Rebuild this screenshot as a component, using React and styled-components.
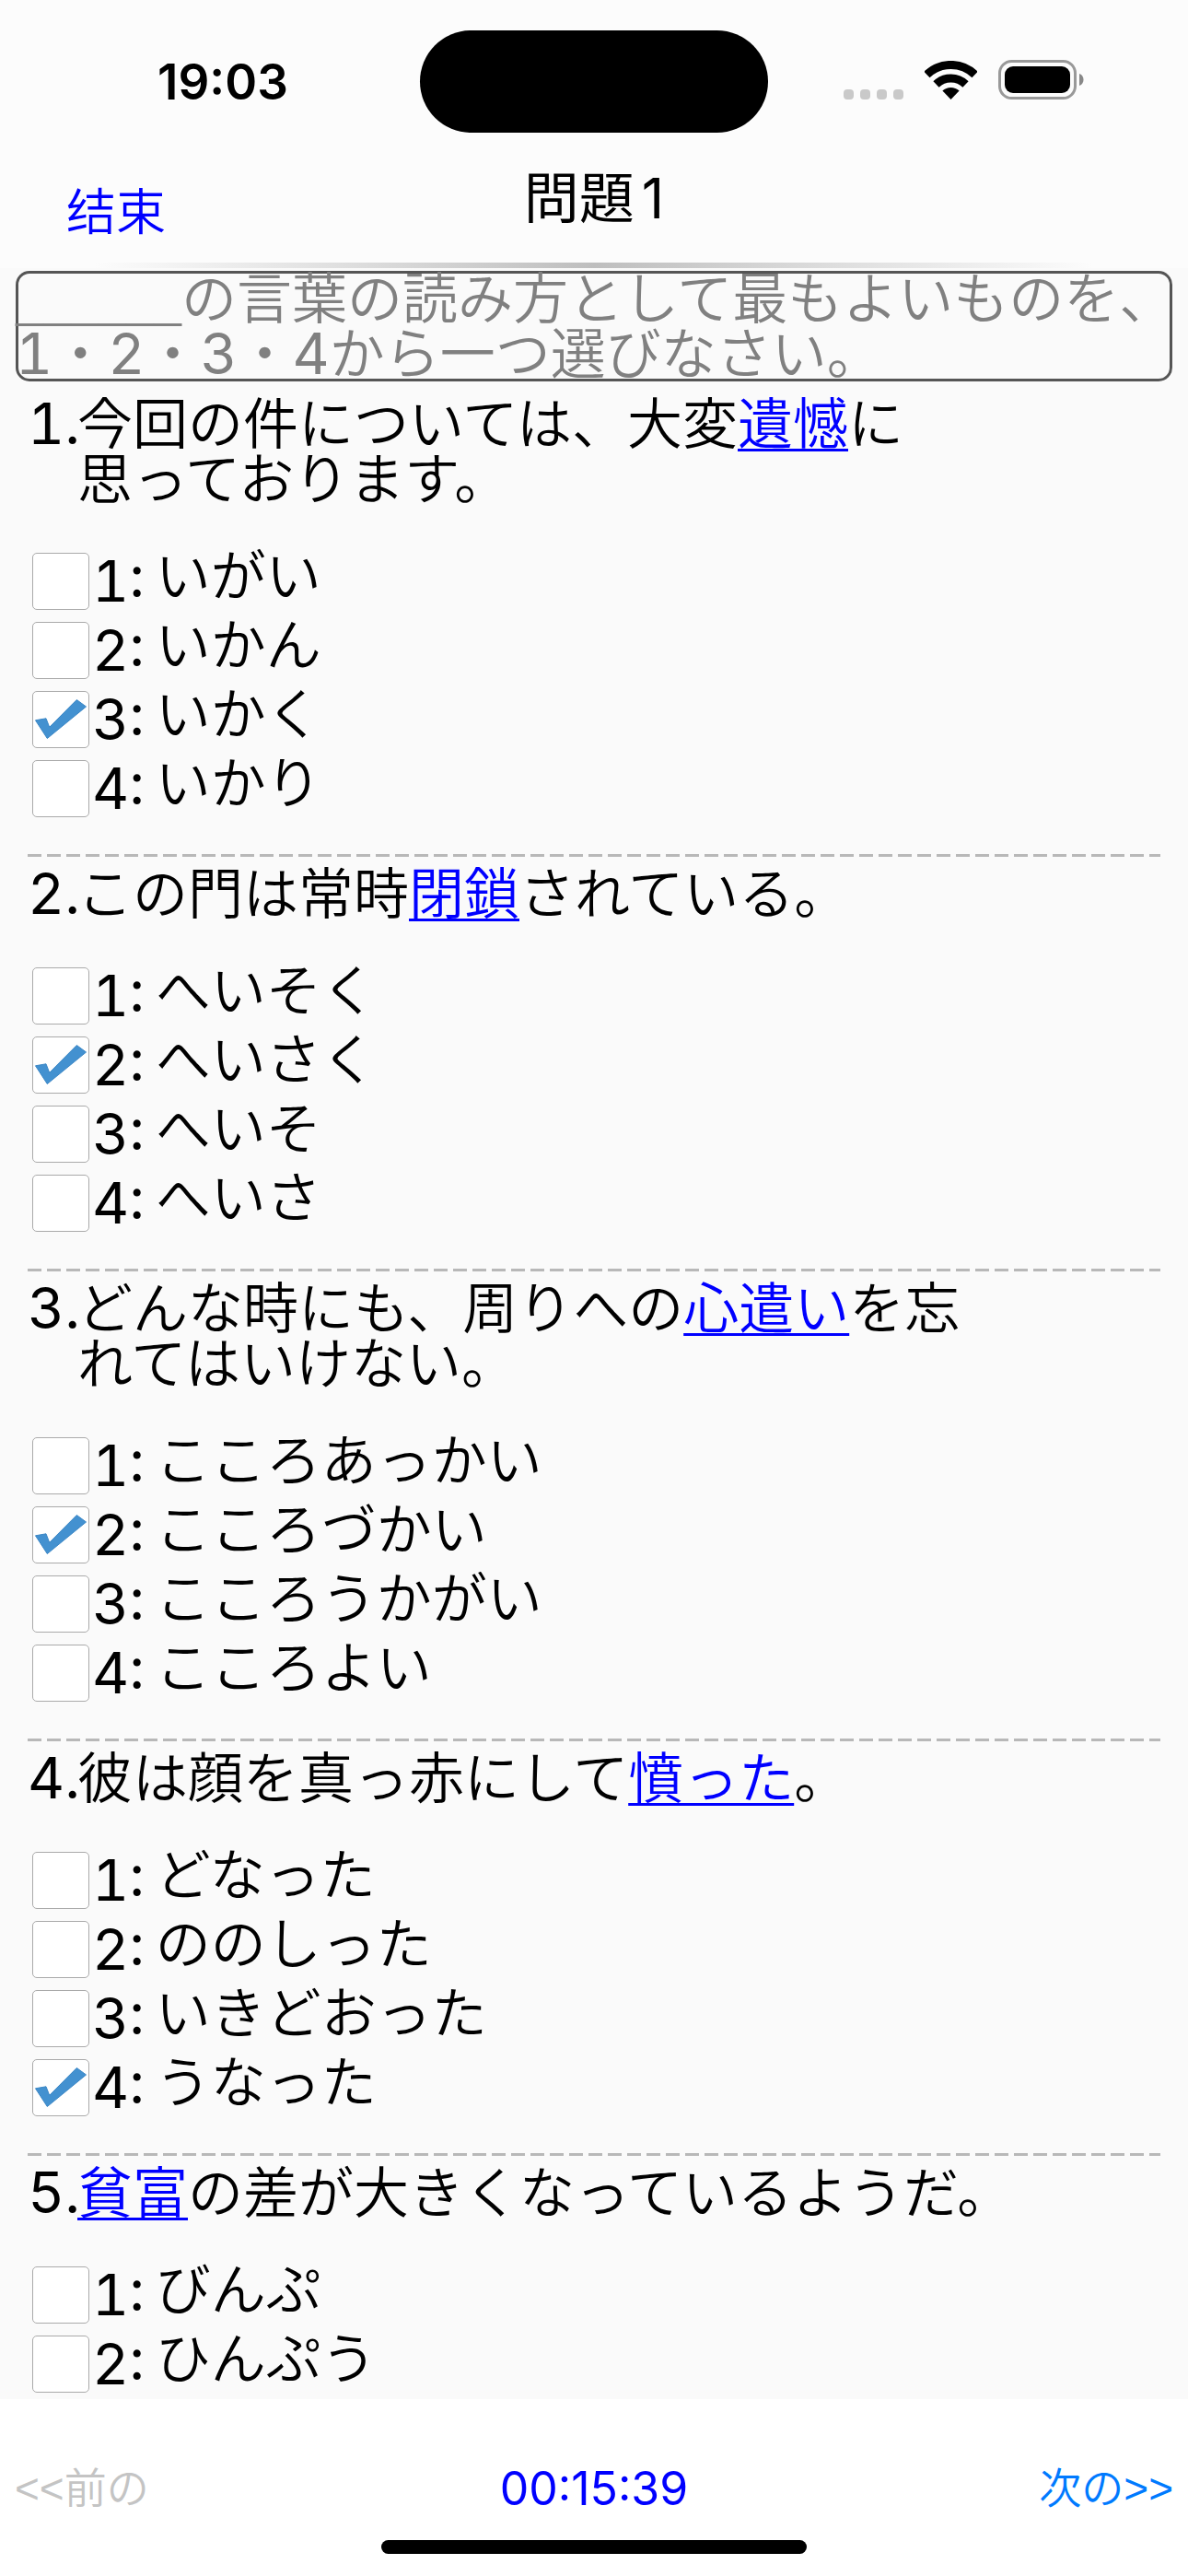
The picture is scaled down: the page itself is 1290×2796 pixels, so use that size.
import React, { useState } from 'react';
import styled, { createGlobalStyle } from 'styled-components';

const questions = [
  {
    id: 1,
    before: '今回の件については、大変',
    word: '遺憾',
    after: ['に', '思っております。'],
    options: ['いがい', 'いかん', 'いかく', 'いかり'],
  },
  {
    id: 2,
    before: 'この門は常時',
    word: '閉鎖',
    after: ['されている。'],
    options: ['へいそく', 'へいさく', 'へいそ', 'へいさ'],
  },
  {
    id: 3,
    before: 'どんな時にも、周りへの',
    word: '心遣い',
    after: ['を忘', 'れてはいけない。'],
    options: ['こころあっかい', 'こころづかい', 'こころうかがい', 'こころよい'],
  },
  {
    id: 4,
    before: '彼は顔を真っ赤にして',
    word: '憤った',
    after: ['。'],
    options: ['どなった', 'ののしった', 'いきどおった', 'うなった'],
  },
  {
    id: 5,
    before: '',
    word: '貧富',
    after: ['の差が大きくなっているようだ。'],
    options: ['びんぷ', 'ひんぷう'],
  },
];

const StatusBar = () => {
  return (
    <StatusWrapper>
      <Clock>19:03</Clock>
      <Island />
      <StatusIcons>
        {/* no signal */}
        <svg width='65' height='11' viewBox='0 0 65 11'>
          {[0, 18, 36, 54].map((x) => (
            <rect key={x} x={x} width='11' height='11' rx='4' fill='#c9c9c9' />
          ))}
        </svg>
        {/* wifi */}
        <svg width='57' height='42' viewBox='0 0 57 42'>
          <g fill='none' stroke='#000' strokeWidth='9'>
            <path d='M2.4 15 A37.5 37.5 0 0 1 54.6 15' />
            <path d='M12.5 25.5 A23 23 0 0 1 44.5 25.5' />
          </g>
          <path d='M28.5 42 L19.4 32.6 A13.5 13.5 0 0 1 37.6 32.6 Z' />
        </svg>
        {/* battery */}
        <svg width='93' height='43' viewBox='0 0 93 43'>
          <rect
            x='1.5'
            y='1.5'
            width='82'
            height='40'
            rx='13'
            fill='none'
            stroke='#999'
            strokeWidth='3'
          />
          <rect x='7' y='7' width='71' height='29' rx='9' />
          <path d='M88 15 C94 17 94 26 88 28 Z' fill='#888' />
        </svg>
      </StatusIcons>
    </StatusWrapper>
  );
};

const Question = ({ question, answer, updateAnswer }) => {
  const { id, before, word, after, options } = question;

  return (
    <QuestionWrapper>
      <Sentence>
        <Digit>{id}.</Digit>
        <p>
          {before}
          <Keyword>{word}</Keyword>
          {after.map((line, index) => (
            <React.Fragment key={line}>
              {index > 0 && <br />}
              {line}
            </React.Fragment>
          ))}
        </p>
      </Sentence>
      {options.map((option, index) => {
        const number = index + 1;
        return (
          <Option key={option}>
            <Box>
              <input
                type='checkbox'
                checked={answer === number}
                onChange={() => updateAnswer(id, number)}
              />
              {answer === number && (
                <svg width='62' height='62' viewBox='0 0 62 62'>
                  <path
                    d='M3.5 31.8 L15 29.8 L18.7 39.3 L48.3 9.5 L58.5 17 L16.3 51.5 Z'
                    fill='#4391d0'
                    stroke='#3b87c6'
                  />
                </svg>
              )}
            </Box>
            <Digit>{number}:</Digit>
            <OptionText>{option}</OptionText>
          </Option>
        );
      })}
    </QuestionWrapper>
  );
};

const App = () => {
  const [answers, setAnswers] = useState({ 1: 3, 2: 2, 3: 2, 4: 4 });

  const updateAnswer = (id, number) => {
    setAnswers({ ...answers, [id]: number });
  };

  return (
    <Page>
      <GlobalStyle />
      <Header>
        <StatusBar />
        <Nav>
          <EndButton type='button'>结束</EndButton>
          <Title>
            問題<span>1</span>
          </Title>
        </Nav>
        <HeaderShadow />
      </Header>
      <Notice>
        <Blank>______</Blank>の言葉の読み方として最もよいものを、
        <br />
        <Digit>1</Digit>・<Digit>2</Digit>・<Digit>3</Digit>・<Digit>4</Digit>
        から一つ選びなさい。
      </Notice>
      <List>
        {questions.map((question) => (
          <Question
            key={question.id}
            question={question}
            answer={answers[question.id]}
            updateAnswer={updateAnswer}
          />
        ))}
      </List>
      <Footer>
        <Pager>
          <PageButton type='button' disabled>
            &lt;&lt;前の
          </PageButton>
          <Timer>00:15:39</Timer>
          <PageButton type='button'>次の&gt;&gt;</PageButton>
        </Pager>
        <HomeBar />
      </Footer>
    </Page>
  );
};

const GlobalStyle = createGlobalStyle`
  * {
    box-sizing: border-box;
    margin: 0;
    padding: 0;
  }
  body {
    background: #fafafa;
    color: #000;
    font-family: Inter, 'Noto Sans CJK JP', sans-serif;
    font-weight: 350;
  }
  button {
    background: transparent;
    border: none;
    font: inherit;
    cursor: pointer;
  }
`;

const Page = styled.div`
  display: flex;
  flex-direction: column;
  height: 100vh;
  font-size: 60px;
  line-height: 60px;
`;

const Header = styled.header`
  background: #fcfcfc;
`;

const StatusWrapper = styled.div`
  display: grid;
  grid-template-columns: 1fr 378px 1fr;
  align-items: center;
  justify-items: center;
  padding-top: 33px;
`;

const Clock = styled.span`
  padding-left: 28px;
  font-size: 53px;
  font-weight: 600;
`;

const Island = styled.div`
  width: 100%;
  height: 111px;
  border-radius: 56px;
  background: #000;
`;

const StatusIcons = styled.div`
  display: flex;
  align-items: flex-end;
  gap: 23px;
  padding: 0 32px 4px 0;
`;

const Nav = styled.nav`
  display: grid;
  grid-template-columns: 1fr auto 1fr;
  align-items: center;
  height: 141px;
`;

const EndButton = styled.button`
  justify-self: start;
  padding: 24px 0 0 72px;
  color: #0000ff;
  font-family: 'Noto Sans CJK SC', sans-serif;
  font-size: 54px;
`;

const Title = styled.h1`
  font-size: 60px;
  font-weight: 400;

  span {
    margin-left: 8px;
  }
`;

const HeaderShadow = styled.div`
  height: 6px;
  background: linear-gradient(
    to right,
    transparent 8%,
    #e0e0e0 28%,
    #bebebe 50%,
    #e0e0e0 72%,
    transparent 92%
  );
`;

const Digit = styled.span`
  font-size: 62px;
  font-weight: 400;
  line-height: 40px;
  font-variant-numeric: tabular-nums;
`;

const Notice = styled.p`
  margin: 3px 17px 0;
  border-radius: 15px;
  box-shadow: inset 0 0 0 3px #555;
  color: #808080;
  white-space: nowrap;
`;

const Blank = styled.span`
  font-family: 'Liberation Serif', serif;
  line-height: 40px;
`;

const List = styled.main`
  flex: 1;
  min-height: 0;
  overflow: hidden;
  padding: 16px 30px 0;
`;

const QuestionWrapper = styled.section`
  padding-bottom: 34px;

  /* dashed line between two questions */
  & + &::before {
    content: '';
    display: block;
    height: 3px;
    margin-bottom: 10px;
    background: repeating-linear-gradient(
      to right,
      #b8b8b8 0 15px,
      transparent 15px 21px
    );
  }
`;

const Sentence = styled.div`
  display: flex;
  align-items: baseline;
  margin-bottom: 43px;

  ${Digit} {
    flex: none;
    width: 54px;
  }
`;

const Keyword = styled.u`
  color: #0000ff;
  text-decoration-thickness: 3px;
  text-underline-offset: 5px;
  text-decoration-skip-ink: none;
`;

const Option = styled.label`
  display: flex;
  align-items: center;
  height: 75px;
  padding-left: 5px;

  ${Digit} {
    padding: 0 12px 0 3px;
  }
`;

const Box = styled.span`
  display: grid;

  input,
  svg {
    grid-area: 1 / 1;
  }
  input {
    appearance: none;
    width: 62px;
    height: 62px;
    border: 1px solid #aaa;
    border-radius: 5px;
    background: #fff;
  }
  svg {
    pointer-events: none;
  }
`;

const OptionText = styled.span`
  padding-bottom: 12px;
`;

const Footer = styled.footer`
  padding: 60px 16px 24px;
  background: #fff;
`;

const Pager = styled.div`
  display: grid;
  grid-template-columns: 1fr auto 1fr;
  align-items: center;
  height: 74px;
`;

const PageButton = styled.button`
  justify-self: start;
  color: #007aff;
  font-family: 'Liberation Sans', 'Noto Sans CJK JP', sans-serif;
  font-size: 46px;

  &:disabled {
    color: #c4c4c4;
  }
  &:last-child {
    justify-self: end;
  }
`;

const Timer = styled.time`
  color: #0000ff;
  font-size: 50px;
  font-weight: 400;
`;

const HomeBar = styled.div`
  width: 462px;
  height: 15px;
  margin: 19px auto 0;
  border-radius: 8px;
  background: #000;
`;

export default App;
